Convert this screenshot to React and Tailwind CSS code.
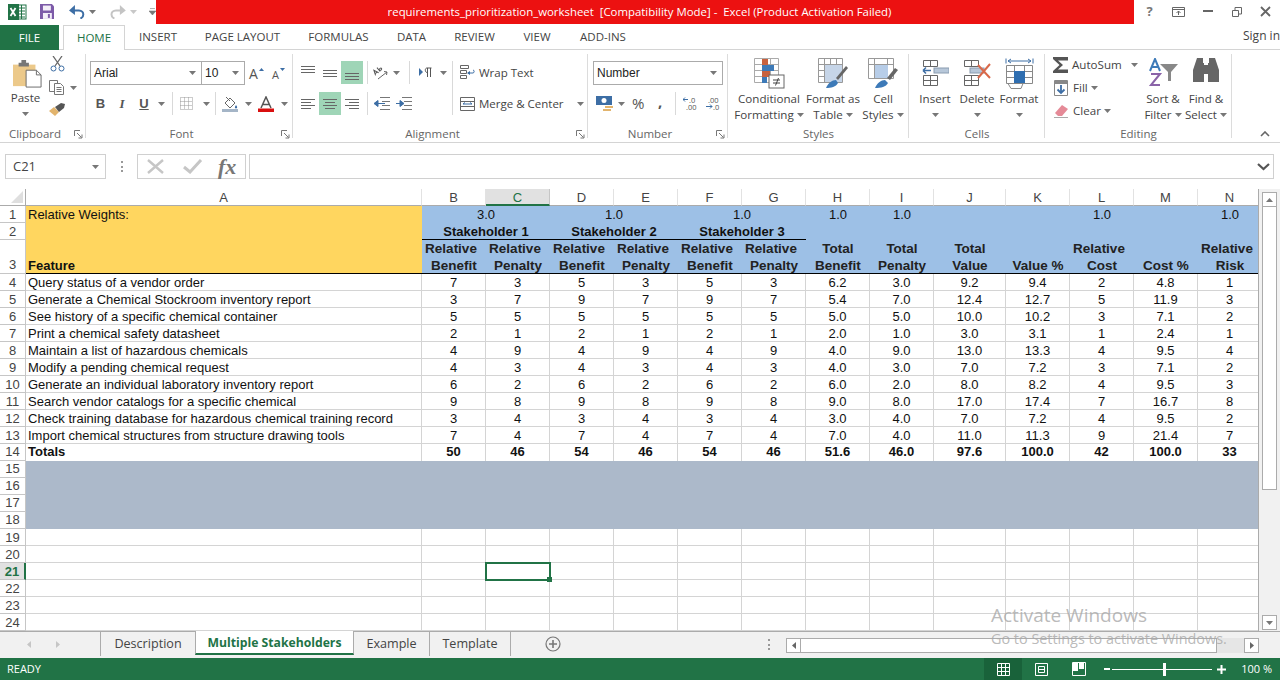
import React from 'react';

const UI = { fontFamily: '"Open Sans", "Noto Sans", sans-serif' };

const rows = [
  ['Query status of a vendor order', 7, 3, 5, 3, 5, 3, '6.2', '3.0', '9.2', '9.4', 2, '4.8', 1],
  ['Generate a Chemical Stockroom inventory report', 3, 7, 9, 7, 9, 7, '5.4', '7.0', '12.4', '12.7', 5, '11.9', 3],
  ['See history of a specific chemical container', 5, 5, 5, 5, 5, 5, '5.0', '5.0', '10.0', '10.2', 3, '7.1', 2],
  ['Print a chemical safety datasheet', 2, 1, 2, 1, 2, 1, '2.0', '1.0', '3.0', '3.1', 1, '2.4', 1],
  ['Maintain a list of hazardous chemicals', 4, 9, 4, 9, 4, 9, '4.0', '9.0', '13.0', '13.3', 4, '9.5', 4],
  ['Modify a pending chemical request', 4, 3, 4, 3, 4, 3, '4.0', '3.0', '7.0', '7.2', 3, '7.1', 2],
  ['Generate an individual laboratory inventory report', 6, 2, 6, 2, 6, 2, '6.0', '2.0', '8.0', '8.2', 4, '9.5', 3],
  ['Search vendor catalogs for a specific chemical', 9, 8, 9, 8, 9, 8, '9.0', '8.0', '17.0', '17.4', 7, '16.7', 8],
  ['Check training database for hazardous chemical training record', 3, 4, 3, 4, 3, 4, '3.0', '4.0', '7.0', '7.2', 4, '9.5', 2],
  ['Import chemical structures from structure drawing tools', 7, 4, 7, 4, 7, 4, '7.0', '4.0', '11.0', '11.3', 9, '21.4', 7],
];
const totals = ['Totals', 50, 46, 54, 46, 54, 46, '51.6', '46.0', '97.6', '100.0', 42, '100.0', 33];
const columns = ['A', 'B', 'C', 'D', 'E', 'F', 'G', 'H', 'I', 'J', 'K', 'L', 'M', 'N'];
const headers = [
  ['Relative', 'Benefit'], ['Relative', 'Penalty'], ['Relative', 'Benefit'], ['Relative', 'Penalty'],
  ['Relative', 'Benefit'], ['Relative', 'Penalty'], ['Total', 'Benefit'], ['Total', 'Penalty'],
  ['Total', 'Value'], ['Value %'], ['Relative', 'Cost'], ['Cost %'], ['Relative', 'Risk'],
];
const tabs = [
  ['INSERT', 'w-[66px]'], ['PAGE LAYOUT', 'w-[103px]'], ['FORMULAS', 'w-[89px]'], ['DATA', 'w-[57px]'],
  ['REVIEW', 'w-[69px]'], ['VIEW', 'w-[56px]'], ['ADD-INS', 'w-[76px]'],
];

function Caret({ className = '' }) {
  return (
    <svg width="7" height="4" viewBox="0 0 7 4" className={`inline-block shrink-0 ${className}`}>
      <path d="M0 0h7L3.500 4z" fill="#777" />
    </svg>
  );
}

function Btn({ w, active, children }) {
  return (
    <div className={`${w} h-[23px] flex items-center justify-center shrink-0 ${active ? 'bg-[#9fd5b7]' : ''}`}>
      {children}
    </div>
  );
}

function Lines({ ys, x1 = [0, 0, 0, 0], x2 = [14, 14, 14, 14], color = '#666' }) {
  return (
    <svg width="15" height="14" viewBox="0 0 15 14">
      {ys.map((y, i) => (
        <path key={y} d={`M${x1[i]} ${y + 0.5}H${x2[i]}`} stroke={color} />
      ))}
    </svg>
  );
}

function Sep({ className = '' }) {
  return <div className={`w-px bg-[#d9d9d9] shrink-0 ${className}`} />;
}

function Launcher() {
  return (
    <svg width="9" height="9" viewBox="0 0 9 9" className="absolute right-[3px] bottom-[3px]">
      <path d="M.5 6V.5H6M3 3l4.500 4.500M8 4.500V8H4.500" fill="none" stroke="#777" />
    </svg>
  );
}

function Group({ w, label, launcher, children }) {
  return (
    <div className={`${w} h-[92px] shrink-0 flex flex-col relative`}>
      <div className="h-[76px] flex">{children}</div>
      <div className={`h-[16px] text-[11.5px] leading-[16px] text-center text-[#666] ${launcher ? 'pr-[16px]' : ''}`}>{label}</div>
      {launcher && <Launcher />}
      <div className="absolute right-0 top-[4px] bottom-[4px] w-px bg-[#dcdcdc]" />
    </div>
  );
}

function BigBtn({ w, icon, lines }) {
  return (
    <div className={`${w} shrink-0 flex flex-col items-center`}>
      <div className="h-[33px] mt-[8px] flex items-start justify-center">{icon}</div>
      {lines.map((l, i) => (
        <div key={i} className="h-[16px] text-[11.6px] leading-[16px] text-[#444] whitespace-nowrap flex items-center gap-[3px]">
          {l.text}
          {l.caret && <Caret />}
        </div>
      ))}
    </div>
  );
}

function SelectBox({ w, children }) {
  return (
    <div className={`${w} h-[24px] border border-[#ababab] bg-white flex items-center justify-between pl-[3px] pr-[5px] text-[12px] text-[#222] shrink-0`}>
      <span style={{ fontFamily: '"Liberation Sans", sans-serif' }}>{children}</span>
      <Caret />
    </div>
  );
}

function ExcelLogo() {
  return (
    <svg width="19" height="18" viewBox="0 0 19 18">
      <rect x="7" y="2" width="11" height="14" fill="#fff" stroke="#217346" />
      <path d="M11 5h6M11 8h6M11 11h6M11 14h6M13.500 2v14" stroke="#217346" />
      <rect x="0" y="1" width="11" height="16" fill="#217346" />
      <path d="M2.500 5l5 8M7.500 5l-5 8" stroke="#fff" strokeWidth="1.800" />
    </svg>
  );
}

function TitleBar() {
  return (
    <div className="h-[25px] flex">
      <div className="w-[156px] shrink-0 flex items-center relative">
        <div className="w-[37px] flex justify-end -mt-[2px] pr-[10px]"><ExcelLogo /></div>
        <svg width="15" height="15" viewBox="0 0 15 15" className="ml-[3px] -mt-[2px]">
          <path d="M0 0h12l3 3v12H0z" fill="#7c5aa8" />
          <rect x="3" y="1.500" width="8" height="5" fill="#f3eef8" />
          <rect x="3" y="9" width="9" height="6" fill="#f3eef8" />
          <rect x="8" y="10" width="2" height="4" fill="#7c5aa8" />
        </svg>
        <svg width="16" height="14" viewBox="0 0 16 14" className="ml-[15px] -mt-[2px]">
          <path d="M4 5.500h6c3 0 4.500 2 4.500 4s-1 3.500-3 4" fill="none" stroke="#3d6ea5" strokeWidth="2" />
          <path d="M6 0v10L0 5.500z" fill="#3d6ea5" />
        </svg>
        <Caret className="ml-[4px] -mt-[2px]" />
        <svg width="16" height="14" viewBox="0 0 16 14" className="ml-[14px] -mt-[2px]">
          <path d="M12 5.500H6c-3 0-4.500 2-4.500 4s1 3.500 3 4" fill="none" stroke="#c4c4c4" strokeWidth="2" />
          <path d="M10 0v10l6-4.500z" fill="#c4c4c4" />
        </svg>
        <Caret className="ml-[4px] -mt-[2px] opacity-40" />
        <svg width="7" height="8" viewBox="0 0 7 8" className="ml-[12px] -mt-[2px]">
          <path d="M1 .500h5M0 3h7L3.500 7z" fill="#777" stroke="#777" strokeWidth=".6" />
        </svg>
      </div>
      <div className="w-[978px] h-[24px] shrink-0 bg-[#ec1111] text-white text-[11.4px] flex items-center justify-center pr-[11px] whitespace-pre">
        {'requirements_prioritization_worksheet  [Compatibility Mode] -  Excel (Product Activation Failed)'}
      </div>
      <div className="flex-1 flex -mt-[2px] pl-[1px]">
        <div className="w-[29px] flex items-center justify-center text-[13px] font-bold text-[#777]">?</div>
        <div className="w-[29px] flex items-center justify-center">
          <svg width="13" height="10" viewBox="0 0 13 10"><path d="M.5.500h12v9H.5zM.5 2.500h12M6.500 8V4M4.500 6l2-2 2 2" fill="none" stroke="#666" /></svg>
        </div>
        <div className="w-[29px] flex items-center justify-center">
          <svg width="10" height="3" viewBox="0 0 10 3"><path d="M0 0h10v2H0z" fill="#666" /></svg>
        </div>
        <div className="w-[29px] flex items-center justify-center">
          <svg width="10" height="10" viewBox="0 0 10 10"><path d="M.5 3.500h6v6h-6zM3 3V.500h6.500V7H7" fill="none" stroke="#666" /></svg>
        </div>
        <div className="w-[29px] flex items-center justify-center">
          <svg width="11" height="11" viewBox="0 0 11 11"><path d="M1 1l9 9M10 1l-9 9" stroke="#666" strokeWidth="1.800" /></svg>
        </div>
      </div>
    </div>
  );
}

function TabRow() {
  return (
    <div className="h-[25px] flex border-b border-[#d4d4d4] text-[11.5px] text-[#444]">
      <div className="w-[59px] h-[25px] bg-[#217346] text-white flex items-center justify-center shrink-0">FILE</div>
      <div className="w-[4px]" />
      <div className="w-[62px] h-[25px] border border-b-0 border-[#d4d4d4] bg-white text-[#217346] flex items-center justify-center shrink-0">HOME</div>
      {tabs.map(([t, w]) => (
        <div key={t} className={`${w} flex items-center justify-center shrink-0`}>{t}</div>
      ))}
      <div className="flex-1 flex justify-end pt-[2px] whitespace-nowrap text-[12px]">Sign in</div>
    </div>
  );
}

function Ribbon() {
  return (
    <div className="h-[93px] flex border-b border-[#d4d4d4] relative">
      <Group w="w-[86px]" label="Clipboard" launcher>
        <div className="w-[50px] shrink-0 flex flex-col items-center pl-[1px]">
          <svg width="29" height="31" viewBox="0 0 31 31" className="mt-[8px] ml-[3px]">
            <path d="M0 6h24v23H0z" fill="#ecc98a" />
            <path d="M6 4h3V1h5v3h3v4H6z" fill="#777" />
            <path d="M14 12h11l5 5v13H14z" fill="#fff" stroke="#666" />
            <path d="M25 12v5h5" fill="none" stroke="#666" />
          </svg>
          <div className="h-[16px] mt-[1px] text-[11.6px] leading-[16px] text-[#444]">Paste</div>
          <Caret className="mt-[6px]" />
        </div>
        <div className="flex flex-col pt-[6px]">
          <svg width="15" height="16" viewBox="0 0 15 16">
            <path d="M3 0l7 10M12 0L5 10" stroke="#666" strokeWidth="1.300" />
            <circle cx="3.500" cy="12.500" r="2.500" fill="none" stroke="#3d6ea5" />
            <circle cx="11.500" cy="12.500" r="2.500" fill="none" stroke="#3d6ea5" />
          </svg>
          <div className="flex items-center mt-[8px] -ml-px">
            <svg width="16" height="15" viewBox="0 0 16 15">
              <path d="M.5.500h8v11h-8z" fill="#fff" stroke="#777" />
              <path d="M5.500 3.500h6l3 3v8h-9z" fill="#fff" stroke="#777" />
              <path d="M7.500 7.500h5M7.500 9.500h5M7.500 11.500h5" stroke="#777" />
            </svg>
            <Caret className="ml-[5px]" />
          </div>
          <svg width="17" height="14" viewBox="0 0 17 14" className="mt-[7px] -ml-px">
            <path d="M0 9l5-4 5 5-4 4z" fill="#e2b46d" />
            <path d="M6 5l6-4 4 1-1 4-5 4z" fill="#555" />
          </svg>
        </div>
      </Group>

      <Group w="w-[207px]" label="Font" launcher>
        <div className="pl-[4px] pt-[11px] flex flex-col gap-[8px]">
          <div className="flex items-center h-[23px]">
            <SelectBox w="w-[112px]">Arial</SelectBox>
            <div className="-ml-px"><SelectBox w="w-[44px]">10</SelectBox></div>
            <Btn w="w-[22px]">
              <svg width="17" height="20" viewBox="0 0 17 20"><text x="1" y="16" fontSize="14" fill="#555" fontFamily="Open Sans">A</text><path d="M11 8l2.500-3L16 8z" fill="#3d6ea5" /></svg>
            </Btn>
            <Btn w="w-[22px]">
              <svg width="15" height="16" viewBox="0 0 15 16"><text x="1" y="14" fontSize="11" fill="#555" fontFamily="Open Sans">A</text><path d="M9 3l2.500 3L14 3z" fill="#3d6ea5" /></svg>
            </Btn>
          </div>
          <div className="flex items-center h-[23px]">
            <Btn w="w-[21px]"><span className="font-bold text-[13px] text-[#555]" style={{ fontFamily: '"Liberation Sans", sans-serif' }}>B</span></Btn>
            <Btn w="w-[22px]"><span className="italic font-bold text-[13px] text-[#555]" style={{ fontFamily: '"Liberation Serif", serif' }}>I</span></Btn>
            <Btn w="w-[22px]"><span className="underline font-bold text-[13px] text-[#555]" style={{ fontFamily: '"Liberation Sans", sans-serif' }}>U</span></Btn>
            <Btn w="w-[12px]"><Caret /></Btn>
            <Sep className="h-[23px] ml-[5px]" />
            <Btn w="w-[26px]">
              <svg width="13" height="13" viewBox="0 0 13 13"><path d="M.5.500h12v12H.5zM4.500.500v12M8.500.500v12M.5 4.500h12M.5 8.500h12" fill="none" stroke="#999" strokeDasharray="1 1" /></svg>
            </Btn>
            <Btn w="w-[15px]"><Caret /></Btn>
            <Sep className="h-[23px] ml-[1px]" />
            <Btn w="w-[28px]">
              <svg width="16" height="16" viewBox="0 0 16 16">
                <path d="M3 7l5-5 5 5-5 5z" fill="#fff" stroke="#666" />
                <path d="M4 1l4 4" stroke="#666" />
                <path d="M14 9c1 1.500 1.500 2 1 3-.5.500-1.500.500-2 0-.5-1 .500-2 1-3z" fill="#3d6ea5" />
                <rect x="0" y="13" width="16" height="3" fill="#a5b5c7" />
              </svg>
            </Btn>
            <Btn w="w-[8px]"><Caret /></Btn>
            <Btn w="w-[28px]">
              <svg width="16" height="16" viewBox="0 0 16 16">
                <path d="M3 12L8 1l5 11M5 8.500h6" fill="none" stroke="#555" strokeWidth="1.500" />
                <rect x="0" y="12.500" width="16" height="3.500" fill="#d90f0f" />
              </svg>
            </Btn>
            <Btn w="w-[8px]"><Caret /></Btn>
          </div>
        </div>
      </Group>

      <Group w="w-[295px]" label="Alignment" launcher>
        <div className="pl-[4px] pt-[11px] flex">
          <div className="flex flex-col gap-[8px]">
            <div className="flex">
              <Btn w="w-[22px]"><Lines ys={[0, 3, 6]} /></Btn>
              <Btn w="w-[22px]"><Lines ys={[4, 7, 10]} /></Btn>
              <Btn w="w-[22px]" active><Lines ys={[7, 10, 13]} /></Btn>
              <Sep className="h-[23px] ml-[4px]" />
              <Btn w="w-[32px]">
                <div className="flex items-center gap-[4px] ml-[4px]">
                  <svg width="17" height="17" viewBox="0 0 17 17">
                    <g transform="rotate(-40 6 8)"><path d="M2 9l2-5 2 5M2.700 7.500h2.600M8 4v5M8 7.500c1-1.500 3-1 3 0s-2 1.500-3 0" fill="none" stroke="#555" /></g>
                    <path d="M6 15l9-7M12 7.500l3 .500-.5 3" fill="none" stroke="#666" />
                  </svg>
                  <Caret />
                </div>
              </Btn>
              <div className="w-[9px]" />
              <Sep className="h-[23px]" />
              <Btn w="w-[42px]">
                <div className="flex items-center gap-[6px] ml-[3px]">
                  <svg width="15" height="11" viewBox="0 0 15 11">
                    <path d="M0 1v8l4-4z" fill="#3d6ea5" />
                    <path d="M8.500 1v9M11.500 1v9M8 1h4.500M8 5.500C6 5.500 5.500 1 8 1" fill="none" stroke="#555" />
                  </svg>
                  <Caret />
                </div>
              </Btn>
            </div>
            <div className="flex">
              <Btn w="w-[22px]"><Lines ys={[2, 5, 8, 11]} x2={[14, 10, 14, 10]} /></Btn>
              <Btn w="w-[22px]" active><Lines ys={[2, 5, 8, 11]} x1={[0, 2, 0, 2]} x2={[14, 12, 14, 12]} /></Btn>
              <Btn w="w-[22px]"><Lines ys={[2, 5, 8, 11]} x1={[0, 4, 0, 4]} /></Btn>
              <Sep className="h-[23px] ml-[4px]" />
              <Btn w="w-[22px]">
                <svg width="16" height="13" viewBox="0 0 16 13" className="ml-[6px]">
                  <path d="M6 .5h10M8 4.500h8M8 8.500h8M6 12.500h10" stroke="#777" />
                  <path d="M0 6.500L4 3.500v6zM4 6.500h7" fill="#3d6ea5" stroke="#3d6ea5" />
                </svg>
              </Btn>
              <Btn w="w-[22px]">
                <svg width="16" height="13" viewBox="0 0 16 13" className="ml-[6px]">
                  <path d="M6 .5h10M8 4.500h8M8 8.500h8M6 12.500h10" stroke="#777" />
                  <path d="M8 6.500L4 3.500v6zM0 6.500h5" fill="#3d6ea5" stroke="#3d6ea5" />
                </svg>
              </Btn>
            </div>
          </div>
          <Sep className="h-[54px]" />
          <div className="flex flex-col gap-[8px] pl-[7px] text-[11.5px] text-[#444] whitespace-nowrap">
            <div className="h-[23px] flex items-center gap-[4px]">
              <svg width="15" height="15" viewBox="0 0 15 15">
                <path d="M.5.500h8v3h-8zM.5 5.500h6v3h-6zM.5 10.500h6v3h-6z" fill="none" stroke="#666" />
                <path d="M8 8h5c1.500 0 1.500-3 0-3" fill="none" stroke="#3d6ea5" />
                <path d="M10 6v4L7 8z" fill="#3d6ea5" />
              </svg>
              Wrap Text
            </div>
            <div className="h-[23px] flex items-center gap-[4px]">
              <svg width="15" height="14" viewBox="0 0 15 14">
                <path d="M.5.500h14v13H.5zM.5 4.500h14M.5 9.500h14" fill="none" stroke="#666" />
                <path d="M3 7h9M3 7l2-1.500M12 7l-2-1.500" fill="none" stroke="#3d6ea5" />
              </svg>
              Merge &amp; Center
              <Caret className="ml-[9px]" />
            </div>
          </div>
        </div>
      </Group>

      <Group w="w-[140px]" label="Number" launcher>
        <div className="pl-[5px] pt-[11px] flex flex-col gap-[8px]">
          <SelectBox w="w-[130px]">Number</SelectBox>
          <div className="flex items-center h-[23px] -mt-[1px]">
            <svg width="17" height="16" viewBox="0 0 17 16" className="ml-[3px]">
              <rect x="0" y="0" width="16" height="9" fill="#3d6ea5" />
              <circle cx="8" cy="4.500" r="2.500" fill="#fff" />
              <rect x="9" y="10" width="8" height="2" fill="#e2b46d" />
              <rect x="7" y="13" width="8" height="2" fill="#e2b46d" />
            </svg>
            <Caret className="ml-[5px]" />
            <span className="ml-[7px] text-[15px] text-[#555] w-[16px]">%</span>
            <span className="ml-[10px] text-[15px] font-bold text-[#555] w-[8px] -mt-[5px]">,</span>
            <Sep className="h-[23px] ml-[9px]" />
            <svg width="15" height="15" viewBox="0 0 15 15" className="ml-[7px]">
              <path d="M0 3.500h5M0 3.500l2-2M0 3.500l2 2" fill="none" stroke="#3d6ea5" />
              <text x="6" y="6.500" fontSize="7.500" fill="#555" fontFamily="Open Sans">.0</text>
              <text x="3" y="14" fontSize="7.500" fill="#555" fontFamily="Open Sans">.00</text>
            </svg>
            <svg width="15" height="15" viewBox="0 0 15 15" className="ml-[7px]">
              <text x="3" y="6.500" fontSize="7.500" fill="#555" fontFamily="Open Sans">.00</text>
              <text x="8" y="14" fontSize="7.500" fill="#555" fontFamily="Open Sans">.0</text>
              <path d="M1 10.500h6M7 10.500l-2-2M7 10.500l-2 2" fill="none" stroke="#3d6ea5" />
            </svg>
          </div>
        </div>
      </Group>

      <Group w="w-[181px]" label="Styles">
        <div className="pl-[5px] flex">
          <BigBtn
            w="w-[72px]"
            lines={[{ text: 'Conditional' }, { text: 'Formatting', caret: true }]}
            icon={
              <svg width="31" height="31" viewBox="0 0 31 31">
                <path d="M.5.500h24v24H.5zM8.500.500v24M16.500.500v24M.5 6.500h24M.5 12.500h24M.5 18.500h24" fill="#fff" stroke="#aaa" />
                <rect x="8" y="1" width="6" height="6" fill="#c8623f" />
                <rect x="8" y="7" width="12" height="6" fill="#3d7ab8" />
                <rect x="8" y="13" width="8" height="6" fill="#c8623f" />
                <rect x="8" y="19" width="5" height="6" fill="#3d7ab8" />
                <rect x="15" y="17" width="15" height="13" fill="#fff" stroke="#666" />
                <path d="M19 22h7M19 25h7M24.500 20l-3 7.500" fill="none" stroke="#444" />
              </svg>
            }
          />
          <BigBtn
            w="w-[56px]"
            lines={[{ text: 'Format as' }, { text: 'Table', caret: true }]}
            icon={
              <svg width="31" height="31" viewBox="0 0 31 31">
                <path d="M.5.500h24v24H.5zM6.500.500v24M12.500.500v24M18.500.500v24M.5 6.500h24M.5 12.500h24M.5 18.500h24" fill="#fff" stroke="#999" />
                <rect x="7" y="7" width="17" height="17" fill="#c6d5e8" />
                <path d="M18 20l10-12 2 2-10 12z" fill="#666" />
                <path d="M8 30c2-5 6-8 10-8l2 3c-2 4-7 5-12 5z" fill="#3d7ab8" />
              </svg>
            }
          />
          <BigBtn
            w="w-[44px]"
            lines={[{ text: 'Cell' }, { text: 'Styles', caret: true }]}
            icon={
              <svg width="31" height="31" viewBox="0 0 31 31">
                <path d="M.5.500h25v20H.5zM.5 6.500h25M6.500.500v20M19.500.500v20" fill="#fff" stroke="#999" />
                <rect x="7" y="7" width="13" height="13" fill="#b7cde8" />
                <path d="M19 20l8-10 3 2-8 10z" fill="#666" />
                <path d="M7 30c2-5 6-8 10-8l3 3c-2 4-7 5-13 5z" fill="#3d7ab8" />
              </svg>
            }
          />
        </div>
      </Group>

      <Group w="w-[136px]" label="Cells">
        <div className="pl-[5px] flex">
          <BigBtn
            w="w-[42px]"
            lines={[{ text: 'Insert' }, { text: <Caret /> }]}
            icon={
              <svg width="28" height="28" viewBox="0 0 28 28">
                <path d="M2.500 2.500h14v6h-14zM9.500 2.500v6M2.500 17.500h14v10h-14zM2.500 22.500h14M9.500 17.500v10" fill="none" stroke="#666" />
                <rect x="13" y="10" width="15" height="5" fill="#b7c7d9" stroke="#8a9cb0" />
                <path d="M2 12.500h8M2 12.500l3-3M2 12.500l3 3" fill="none" stroke="#3d6ea5" strokeWidth="1.500" />
              </svg>
            }
          />
          <BigBtn
            w="w-[42px]"
            lines={[{ text: 'Delete' }, { text: <Caret /> }]}
            icon={
              <svg width="30" height="28" viewBox="0 0 30 28">
                <path d="M2.500 2.500h14v6h-14zM9.500 2.500v6M2.500 17.500h14v10h-14zM2.500 22.500h14M9.500 17.500v10" fill="none" stroke="#666" />
                <rect x="8" y="10" width="14" height="5" fill="#b7c7d9" stroke="#8a9cb0" />
                <path d="M16 7l12 13M28 6L16 20" stroke="#d9694a" strokeWidth="2" />
              </svg>
            }
          />
          <BigBtn
            w="w-[42px]"
            lines={[{ text: 'Format' }, { text: <Caret /> }]}
            icon={
              <svg width="29" height="31" viewBox="0 0 29 31">
                <path d="M1 .5v5M28 .5v5M3 3h23M3 3l3-2M3 3l3 2M26 3l-3-2M26 3l-3 2" fill="none" stroke="#3d6ea5" />
                <path d="M1.500 7.500h26v18h-26zM1.500 13.500h26M1.500 19.500h26M9.500 7.500v18M19.500 7.500v18M3 25.500l3 5h10l2-5" fill="none" stroke="#888" />
                <rect x="9" y="13" width="11" height="12" fill="#2f6eb0" />
              </svg>
            }
          />
        </div>
      </Group>

      <Group w="w-[187px]" label="Editing">
        <div className="pl-[8px] flex">
          <div className="w-[87px] shrink-0 flex flex-col pt-[3px] text-[11.6px] text-[#444]">
            <div className="h-[23px] flex items-center">
              <svg width="16" height="16" viewBox="0 0 16 16" className="mr-[3px]">
                <path d="M0 0h15v3.500H5l5 4.500-5 4.500h10V16H0v-2l6.500-6L0 2z" fill="#555" />
              </svg>
              AutoSum
              <Caret className="ml-[9px]" />
            </div>
            <div className="h-[23px] flex items-center">
              <svg width="15" height="16" viewBox="0 0 15 16" className="mr-[4px] ml-px">
                <path d="M.5.500h13v15H.5z" fill="#fff" stroke="#888" />
                <rect x="1" y="1" width="12" height="3" fill="#888" />
                <path d="M7 5v8M3.500 9.500L7 13l3.500-3.500" fill="none" stroke="#3d6ea5" strokeWidth="1.800" />
              </svg>
              Fill
              <Caret className="ml-[3px]" />
            </div>
            <div className="h-[23px] flex items-center">
              <svg width="15" height="14" viewBox="0 0 15 14" className="mr-[4px] ml-px">
                <path d="M1 9l7-8 6 4-6 7H4z" fill="#e58a97" />
                <path d="M0 13.500h14" stroke="#aaa" />
              </svg>
              Clear
              <Caret className="ml-[3px]" />
            </div>
          </div>
          <BigBtn
            w="w-[46px]"
            lines={[{ text: 'Sort &' }, { text: 'Filter', caret: true }]}
            icon={
              <svg width="31" height="30" viewBox="0 0 31 30">
                <path d="M2 13L7 1l5 12M3.500 9h7" fill="none" stroke="#3d7ab8" strokeWidth="2" />
                <path d="M3 16h9L3 27h9" fill="none" stroke="#8a63a8" strokeWidth="2" />
                <path d="M12 6h18l-7 8v9h-3v-9z" fill="#888" />
              </svg>
            }
          />
          <BigBtn
            w="w-[40px]"
            lines={[{ text: 'Find &' }, { text: 'Select', caret: true }]}
            icon={
              <svg width="28" height="24" viewBox="0 0 28 24">
                <path d="M5 0h6v5h1v19H1V12zM17 0h6l4 12v12H16V5h1zM12 7h4v9h-4z" fill="#666" />
              </svg>
            }
          />
        </div>
      </Group>

      <svg width="10" height="6" viewBox="0 0 10 6" className="absolute right-[10px] bottom-[5px]">
        <path d="M1 5l4-4 4 4" fill="none" stroke="#666" strokeWidth="1.600" />
      </svg>
    </div>
  );
}

function FormulaBar() {
  return (
    <div className="h-[46px] flex items-start pt-[11px] pl-[5px] bg-white">
      <div className="w-[101px] h-[25px] border border-[#d0d0d0] flex items-center justify-between pl-[7px] pr-[6px] text-[13px] text-[#444]">
        C21
        <Caret />
      </div>
      <div className="w-[31px] h-[25px] flex items-center justify-center">
        <div className="h-[11px] w-[2px] border-l-2 border-dotted border-[#999]" />
      </div>
      <div className="w-[109px] h-[25px] border border-[#d0d0d0] flex items-center shrink-0">
        <svg width="18" height="15" viewBox="0 0 18 15" className="ml-[9px]">
          <path d="M1 1l15 13M16 1L1 14" stroke="#c6c6c6" strokeWidth="2.400" />
        </svg>
        <svg width="20" height="15" viewBox="0 0 20 15" className="ml-[18px]">
          <path d="M1 8l6 5L18 1" fill="none" stroke="#c6c6c6" strokeWidth="3" />
        </svg>
        <span className="ml-[15px] text-[22px] italic font-bold text-[#777] leading-[20px]" style={{ fontFamily: '"Liberation Serif", serif' }}>fx</span>
      </div>
      <div className="w-[3px]" />
      <div className="w-[1025px] h-[25px] border border-[#d0d0d0] flex items-center justify-end pr-[3px]">
        <svg width="13" height="8" viewBox="0 0 13 8"><path d="M1 1l5.500 5L12 1" fill="none" stroke="#555" strokeWidth="2.200" /></svg>
      </div>
    </div>
  );
}

function RowHead({ n, active, className = 'pt-px' }) {
  return (
    <div className={`flex justify-center leading-[16px] border-b border-r ${active ? 'bg-[#e1e1e1] text-[#217346] font-bold border-r-2 border-r-[#217346] border-b-[#c6c6c6]' : 'text-[#444] border-[#c6c6c6]'} ${className}`}>
      {n}
    </div>
  );
}

function Sheet() {
  const blank = Array.from({ length: 14 });
  return (
    <div className="h-[442px] flex bg-[#f1f1f1]">
      <div
        className="w-[1258px] shrink-0 grid grid-cols-[26px_396px_repeat(8,64px)_72px_repeat(4,64px)] grid-rows-[17px_17px_17px_34px_repeat(21,17px)] bg-white text-[13px] text-[#111] overflow-hidden"
        style={{ fontFamily: '"Liberation Sans", Arial, sans-serif' }}
      >
        {/* column heads */}
        <div className="relative border-b border-r border-[#ababab]">
          <svg width="12" height="12" viewBox="0 0 12 12" className="absolute right-[2px] bottom-[2px]"><path d="M12 0v12H0z" fill="#dfdfdf" /></svg>
        </div>
        {columns.map((c) => (
          <div
            key={c}
            className={`flex justify-center leading-[16px] pt-px border-b border-r ${c === 'C' ? 'bg-[#e1e1e1] text-[#217346] border-b-2 border-b-[#217346] border-r-[#c6c6c6]' : 'text-[#444] border-b-[#ababab] border-r-[#e2e2e2]'}`}
          >
            {c}
          </div>
        ))}

        {/* row 1 */}
        <RowHead n={1} />
        <div className="row-span-3 bg-[#ffd65f] border-b border-black flex flex-col justify-between px-[2px]">
          <div className="leading-[16px] pt-px">Relative Weights:</div>
          <div className="font-bold leading-[14px]">Feature</div>
        </div>
        <div className="col-span-2 bg-[#9dc0e6] text-center leading-[16px] pt-px">3.0</div>
        <div className="col-span-2 bg-[#9dc0e6] text-center leading-[16px] pt-px">1.0</div>
        <div className="col-span-2 bg-[#9dc0e6] text-center leading-[16px] pt-px">1.0</div>
        <div className="bg-[#9dc0e6] text-center leading-[16px] pt-px">1.0</div>
        <div className="bg-[#9dc0e6] text-center leading-[16px] pt-px">1.0</div>
        <div className="col-span-2 bg-[#9dc0e6]" />
        <div className="bg-[#9dc0e6] text-center leading-[16px] pt-px">1.0</div>
        <div className="bg-[#9dc0e6]" />
        <div className="bg-[#9dc0e6] text-center leading-[16px] pt-px">1.0</div>

        {/* row 2 */}
        <RowHead n={2} />
        <div className="col-span-2 bg-[#9dc0e6] border-b border-black text-center font-bold leading-[16px] pt-px">Stakeholder 1</div>
        <div className="col-span-2 bg-[#9dc0e6] border-b border-black text-center font-bold leading-[16px] pt-px">Stakeholder 2</div>
        <div className="col-span-2 bg-[#9dc0e6] border-b border-black text-center font-bold leading-[16px] pt-px">Stakeholder 3</div>
        <div className="col-span-7 bg-[#9dc0e6]" />

        {/* row 3 */}
        <RowHead n={3} className="items-end" />
        {headers.map((h, i) => (
          <div key={i} className="bg-[#9dc0e6] border-b border-black flex flex-col justify-end items-center font-bold text-[13.5px] leading-[17px] text-[#222] whitespace-nowrap">
            <div className="translate-y-px flex flex-col items-center">
              {h.map((t, k) => <div key={t} className={k === 0 && h.length > 1 && t === 'Relative' ? 'pr-[6px]' : ''}>{t}</div>)}
            </div>
          </div>
        ))}

        {/* data rows */}
        {rows.map((r, i) => (
          <React.Fragment key={i}>
            <RowHead n={i + 4} />
            {r.map((v, j) => (
              <div key={j} className={`border-b border-r border-[#d4d4d4] leading-[16px] pt-px whitespace-nowrap ${j === 0 ? 'pl-[2px]' : 'text-center'}`}>{v}</div>
            ))}
          </React.Fragment>
        ))}

        {/* totals */}
        <RowHead n={14} className="" />
        {totals.map((v, j) => (
          <div key={j} className={`border-r border-[#d4d4d4] leading-[16px] font-bold ${j === 0 ? 'pl-[2px]' : 'text-center'}`}>{v}</div>
        ))}

        {/* grey band */}
        {[15, 16, 17, 18].map((n) => (
          <React.Fragment key={n}>
            <RowHead n={n} className="" />
            {n === 15 && <div className="col-span-14 row-span-4 bg-[#acb9ca]" />}
          </React.Fragment>
        ))}

        {/* empty rows */}
        {[19, 20, 21, 22, 23, 24].map((n) => (
          <React.Fragment key={n}>
            <RowHead n={n} active={n === 21} />
            {blank.map((_, j) => (
              <div key={j} className={`relative border-b border-r border-[#d4d4d4] ${n === 21 && j === 2 ? 'z-10' : ''}`}>
                {n === 21 && j === 2 && (
                  <div className="absolute -left-[1px] -top-[1px] w-[66px] h-[19px] border-2 border-[#217346]">
                    <div className="absolute -right-[3px] -bottom-[3px] w-[5px] h-[5px] bg-[#217346]" />
                  </div>
                )}
              </div>
            ))}
          </React.Fragment>
        ))}
      </div>

      {/* vertical scrollbar */}
      <div className="flex-1 border-l border-[#ababab] flex flex-col pl-[3px] pr-[3px] pt-[3px] pb-[1px]">
        <div className="h-[15px] bg-white border border-[#ababab] flex items-center justify-center">
          <svg width="7" height="4" viewBox="0 0 7 4"><path d="M3.500 0L7 4H0z" fill="#777" /></svg>
        </div>
        <div className="h-[283px] bg-white border border-t-0 border-[#ababab]" />
        <div className="flex-1" />
        <div className="h-[15px] bg-white border border-[#ababab] flex items-center justify-center">
          <svg width="7" height="4" viewBox="0 0 7 4"><path d="M0 0h7L3.500 4z" fill="#777" /></svg>
        </div>
      </div>
    </div>
  );
}

function SheetTabs() {
  return (
    <div className="h-[27px] bg-[#f1f1f1] border-t border-[#ababab] flex text-[12.6px] text-[#444]">
      <div className="w-[100px] shrink-0 flex items-center pl-[27px] gap-[25px] pb-[2px]">
        <svg width="4" height="7" viewBox="0 0 4 7"><path d="M4 0v7L0 3.500z" fill="#c6c6c6" /></svg>
        <svg width="4" height="7" viewBox="0 0 4 7"><path d="M0 0v7l4-3.500z" fill="#c6c6c6" /></svg>
      </div>
      <div className="w-[95px] h-[24px] border-l border-[#ababab] flex items-center justify-center shrink-0">Description</div>
      <div className="w-[159px] h-[24px] -mt-px pt-[3px] bg-white border-x border-[#ababab] border-b-2 border-b-[#217346] text-[#217346] text-[12.2px] font-bold flex items-center justify-center shrink-0">Multiple Stakeholders</div>
      <div className="w-[76px] h-[24px] border-r border-[#ababab] flex items-center justify-center shrink-0">Example</div>
      <div className="w-[81px] h-[24px] border-r border-[#ababab] flex items-center justify-center shrink-0">Template</div>
      <div className="w-[34px]" />
      <svg width="16" height="16" viewBox="0 0 16 16" className="mt-[4px] shrink-0">
        <circle cx="8" cy="8" r="7" fill="none" stroke="#777" strokeWidth="1.200" />
        <path d="M8 4v8M4 8h8" stroke="#777" strokeWidth="1.600" />
      </svg>
      <div className="w-[207px]" />
      <div className="h-[11px] w-[2px] mt-[7px] border-l-2 border-dotted border-[#999] shrink-0" />
      <div className="w-[16px]" />
      <div className="w-[473px] h-[15px] mt-[6px] flex shrink-0">
        <div className="w-[15px] bg-white border border-[#ababab] flex items-center justify-center">
          <svg width="4" height="7" viewBox="0 0 4 7"><path d="M4 0v7L0 3.500z" fill="#666" /></svg>
        </div>
        <div className="w-[416px] bg-white border-y border-r border-[#ababab]" />
        <div className="flex-1 bg-[#e6e6e6]" />
        <div className="w-[15px] bg-white border border-[#ababab] flex items-center justify-center">
          <svg width="4" height="7" viewBox="0 0 4 7"><path d="M0 0v7l4-3.500z" fill="#666" /></svg>
        </div>
      </div>
    </div>
  );
}

function StatusBar() {
  return (
    <div className="h-[22px] bg-[#217346] text-white text-[11px] flex items-center pl-[7px]">
      <span>READY</span>
      <div className="flex-1" />
      <div className="w-[38px] h-[22px] bg-[#19623a] flex items-center justify-center">
        <svg width="13" height="13" viewBox="0 0 13 13"><path d="M.5.500h12v12H.5zM4.500.500v12M8.500.500v12M.5 4.500h12M.5 8.500h12" fill="none" stroke="#fff" /></svg>
      </div>
      <div className="w-[38px] flex justify-center">
        <svg width="13" height="13" viewBox="0 0 13 13"><path d="M.5.500h12v12H.5zM3.500 3.500h6v6h-6zM3.500 6.500h6" fill="none" stroke="#fff" /></svg>
      </div>
      <div className="w-[38px] flex justify-center">
        <svg width="14" height="14" viewBox="0 0 14 14"><path d="M.5.500h13v13H.5z" fill="none" stroke="#fff" /><path d="M1 1h5v8H1zM7 1h5v6H7z" fill="#fff" /></svg>
      </div>
      <div className="w-[6px]" />
      <div className="w-[6px] h-[2px] bg-white" />
      <div className="w-[100px] ml-[2px] h-px bg-white relative">
        <div className="absolute left-[51px] -top-[6px] w-[3px] h-[13px] bg-white" />
      </div>
      <svg width="9" height="9" viewBox="0 0 9 9" className="ml-[5px]"><path d="M4.500 0v9M0 4.500h9" stroke="#fff" strokeWidth="2" /></svg>
      <span className="w-[54px] pr-[8px] text-right">100 %</span>
    </div>
  );
}

export default function App() {
  return (
    <div className="w-[1280px] h-[680px] relative overflow-hidden bg-white" style={UI}>
      <TitleBar />
      <TabRow />
      <Ribbon />
      <FormulaBar />
      <Sheet />
      <SheetTabs />
      <StatusBar />
      {/* watermark sits over the grid */}
      <div className="absolute left-[991px] top-[602px] text-[#a8a8a8]/80 pointer-events-none">
        <div className="text-[19px] leading-[27px]">Activate Windows</div>
        <div className="text-[14.400px] leading-[18px] mt-[1px] whitespace-nowrap">Go to Settings to activate Windows.</div>
      </div>
    </div>
  );
}
